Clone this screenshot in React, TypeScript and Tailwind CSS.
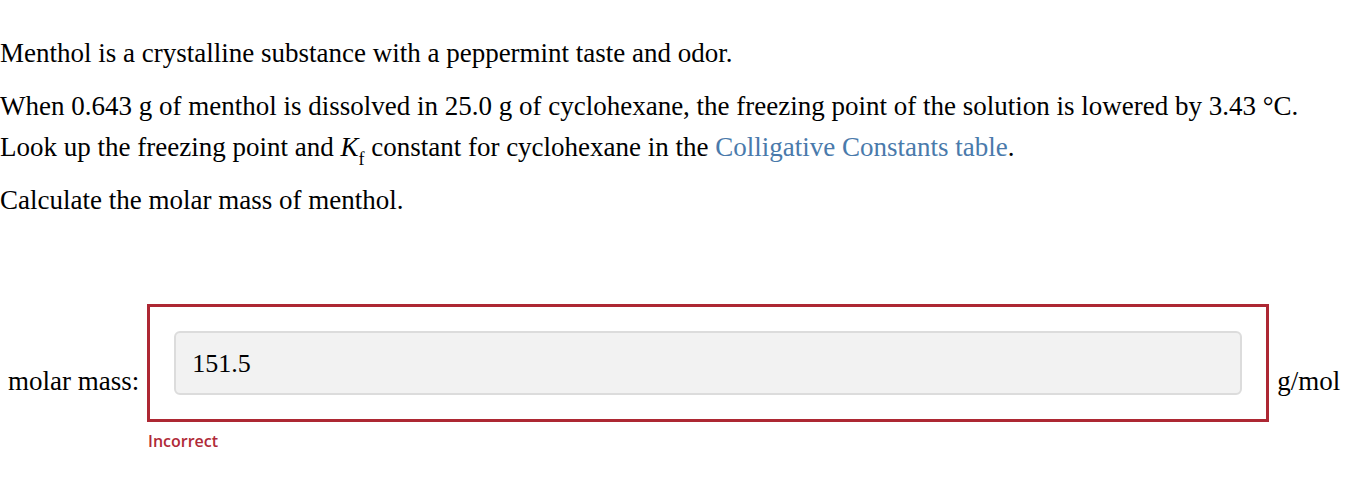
export default function App() {
  return (
    <div className="min-h-[498px] bg-white text-black font-['Liberation_Serif','Times_New_Roman',serif] text-[27px]">
      <div className="pt-[36px]">
        <p className="leading-[34px]">Menthol is a crystalline substance with a peppermint taste and odor.</p>
        <p className="mt-[16px] leading-[41px]">
          When 0.643 g of menthol is dissolved in 25.0 g of cyclohexane, the freezing point of the solution is lowered by 3.43 °C.
          <br />
          Look up the freezing point and <i>K</i>
          <sub className="text-[18px] align-[-4px] leading-none">f</sub> constant for cyclohexane in the{' '}
          <a className="text-[#4a7aab]">Colligative Constants table</a>.
        </p>
        <p className="mt-[15px] leading-[34px]">Calculate the molar mass of menthol.</p>
      </div>

      <div className="mt-[87px] flex items-end">
        <span className="pl-[8px] pr-[8px] pb-[24px] leading-[34px]">molar mass:</span>
        <div className="w-[1122px] h-[118px] border-[3px] border-[#ad2833] flex items-center px-[24px]">
          <div className="w-full h-[64px] bg-[#f2f2f2] border-2 border-[#dcdcdc] rounded-[6px] flex items-center pl-[16px] text-[26px]">
            151.5
          </div>
        </div>
        <span className="pl-[8px] pb-[24px] leading-[34px]">g/mol</span>
      </div>
      <div className="pl-[148px] mt-[7px] font-['Open_Sans',sans-serif] text-[16px] font-semibold text-[#b02a37]">
        Incorrect
      </div>
    </div>
  );
}
